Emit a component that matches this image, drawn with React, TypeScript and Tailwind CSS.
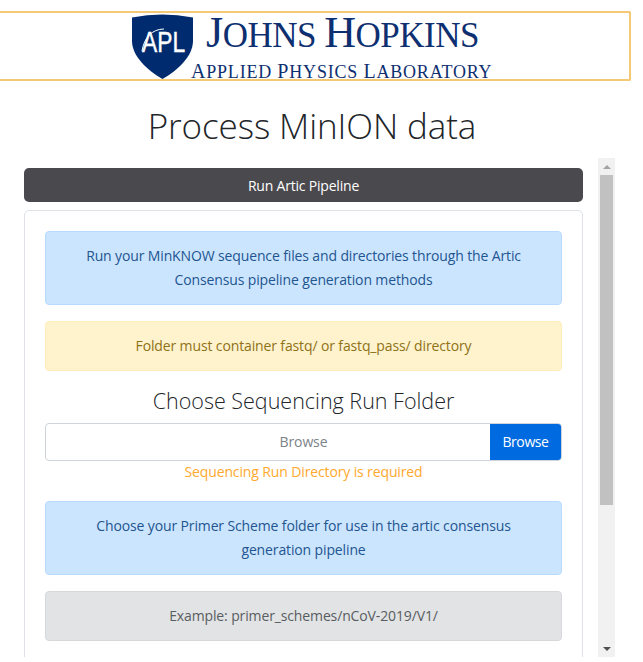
export default function App() {
  return (
    <div className="h-[662px] w-[643px] overflow-hidden bg-white font-['Open_Sans',sans-serif] text-[#212529]">
      <div className="h-[11px]" />
      <header className="flex h-[70px] w-[631px] items-start justify-center rounded-r-[2px] border-y-2 border-r-2 border-[#f3c976] bg-white pr-[5px]">
        <div className="flex h-[65px] w-[360px] items-start">
          <svg viewBox="0 0 61 65" className="mt-px h-[65px] w-[61px] shrink-0">
            <path d="M0 3.5 Q30 -2.5 61 3.5 L61 27 C61 42 46 56 30.5 65 C15 56 0 42 0 27 Z" fill="#002c6f" />
            <path d="M10 37 C12 24 20 15 32 15" fill="none" stroke="#fff" strokeWidth="1" />
            <g transform="translate(10 38) scale(.76 1)">
              <text fill="#fff" stroke="#fff" strokeWidth="0.4" fontFamily="'Liberation Sans', sans-serif" fontSize="30">APL</text>
            </g>
          </svg>
          <div className="min-w-0 font-['Liberation_Serif',serif] text-[#0e2f70]">
            <div className="ml-[13px] mt-[-2px] whitespace-nowrap text-[35px] leading-[44px] tracking-[-0.5px]">
              <span className="text-[44px]">J</span>OHNS <span className="text-[44px]">H</span>OPKINS
            </div>
            <div className="ml-[-2px] mt-[3px] whitespace-nowrap text-[18px] leading-[20px] tracking-[.8px]">
              <span className="text-[20px]">A</span>PPLIED <span className="text-[20px]">P</span>HYSICS <span className="text-[20px]">L</span>ABORATORY
            </div>
          </div>
        </div>
      </header>
      <h1 className="mt-[23px] pr-[19px] text-center text-[35px] font-light leading-[44px] tracking-[-0.1px]">Process MinION data</h1>
      <div className="mt-[10px] flex h-[499px] w-[615px]">
        <main className="min-w-0 flex-1 overflow-hidden pl-[24px] pr-[15px] pt-[10px]">
          <div className="flex h-[34px] items-center justify-center rounded-[5px] bg-[#4a494e] text-[14px] font-normal tracking-[-0.2px] text-white">
            Run Artic Pipeline
          </div>
          <section className="mt-[8px] rounded-t-[5px] border border-[#dee2e6] px-[20px] pt-[20px] text-[14px] tracking-[-0.13px]">
            <div className="rounded-[4px] border border-[#b8daff] bg-[#cce5ff] px-[20px] py-[12px] text-center leading-[24px] text-[#22558f]">
              Run your MinKNOW sequence files and directories through the Artic Consensus pipeline generation methods
            </div>
            <div className="mt-[16px] rounded-[4px] border border-[#ffeeba] bg-[#fff3cd] px-[20px] py-[12px] text-center leading-[24px] text-[#8f7118]">
              Folder must container fastq/ or fastq_pass/ directory
            </div>
            <h2 className="mt-[14px] text-center text-[21.5px] font-light leading-[32px] tracking-normal">Choose Sequencing Run Folder</h2>
            <div className="relative mt-[6px] flex h-[38px] items-center justify-center overflow-hidden rounded-[4px] border border-[#ced4da] pb-[2px] text-[#7b838a]">
              Browse
              <button className="absolute inset-y-0 right-0 w-[71px] bg-[#006be0] pb-[2px] text-[14px] font-normal tracking-[-0.4px] text-white">Browse</button>
            </div>
            <p className="text-center leading-[21px] text-[#ffa92e]">Sequencing Run Directory is required</p>
            <div className="mt-[19px] rounded-[4px] border border-[#b8daff] bg-[#cce5ff] px-[20px] py-[12px] text-center leading-[24px] text-[#22558f]">
              Choose your Primer Scheme folder for use in the artic consensus generation pipeline
            </div>
            <div className="mt-[16px] rounded-[4px] border border-[#d6d8db] bg-[#e2e3e5] px-[20px] py-[12px] text-center leading-[24px] text-[#585d61]">
              Example: primer_schemes/nCoV-2019/V1/
            </div>
            <div className="h-[40px]" />
          </section>
        </main>
        <div className="flex w-[17px] shrink-0 flex-col bg-[#f1f1f1]">
          <div className="flex h-[17px] items-center justify-center">
            <div className="h-0 w-0 border-x-[4px] border-b-[4px] border-x-transparent border-b-[#a3a3a3]" />
          </div>
          <div className="mx-[2px] h-[330px] bg-[#c1c1c1]" />
          <div className="flex-1" />
          <div className="flex h-[17px] items-center justify-center">
            <div className="h-0 w-0 border-x-[4px] border-t-[4px] border-x-transparent border-t-[#505050]" />
          </div>
        </div>
      </div>
    </div>
  );
}
